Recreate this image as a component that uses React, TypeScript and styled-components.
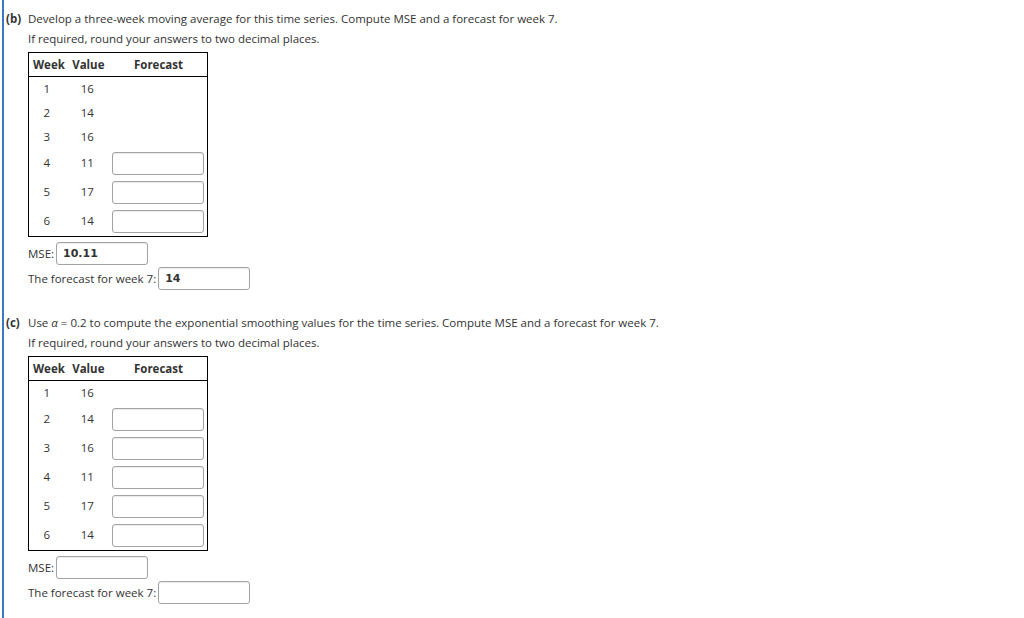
import React from "react";
import styled, { createGlobalStyle } from "styled-components";

const Global = createGlobalStyle`
  html, body { margin: 0; padding: 0; background: #fff; }
  body { font-family: "Open Sans", "DejaVu Sans", sans-serif; color: #333; }
`;

const Page = styled.div`
  margin-left: 2px;
  min-height: 618px;
  box-sizing: border-box;
  border-left: 2px solid #3c78c3;
  padding-top: 9px;
`;

const Part = styled.section<{ $gap?: number }>`
  display: grid;
  grid-template-columns: 22px 1fr;
  padding-left: 2px;
  margin-top: ${(p) => p.$gap ?? 0}px;
  font-size: 11.5px;
  line-height: 20px;
`;

const Label = styled.b`
  font-weight: 700;
  color: #333;
`;

const Body = styled.div`
  display: flex;
  flex-direction: column;
  align-items: flex-start;
`;

const Line = styled.p`
  margin: 0;
  white-space: nowrap;
`;

const Table = styled.table`
  margin-top: 3px;
  border: 1px solid #000;
  border-collapse: collapse;
  width: 180px;
  table-layout: fixed;
`;

const Col = styled.col<{ $w: number }>`
  width: ${(p) => p.$w}px;
`;

const Th = styled.th<{ $indent?: number }>`
  height: 23px;
  padding: 0;
  text-indent: ${(p) => p.$indent ?? 0}px;
  font-weight: 700;
  text-align: center;
  border-bottom: 1px solid #000;
  color: #333;
`;

const Td = styled.td<{ $tall?: boolean }>`
  height: ${(p) => (p.$tall ? 27 : 24)}px;
  padding: 0 0 ${(p) => (p.$tall ? 2 : 0)}px;
  text-align: center;
  vertical-align: middle;
`;

const InputCell = styled.td`
  padding: 0 0 0 2px;
  text-align: left;
  vertical-align: middle;
`;

const Field = styled.div<{ $w?: number }>`
  box-sizing: border-box;
  width: ${(p) => p.$w ?? 92}px;
  height: 23px;
  border: 1px solid #a3a3a3;
  border-radius: 3px;
  box-shadow: inset 0 1px 1px rgba(0, 0, 0, 0.08);
  background: #fff;
  padding: 0 6px;
  font-family: "DejaVu Sans", Verdana, sans-serif;
  font-weight: 700;
  font-size: 11px;
  line-height: 21px;
  color: #333;
  display: inline-block;
  vertical-align: middle;
`;

const AnswerRow = styled.div<{ $top: number }>`
  display: flex;
  align-items: center;
  gap: 2px;
  margin-top: ${(p) => p.$top}px;
  height: 23px;
  white-space: nowrap;
`;

type Row = { week: number; value: number; input: boolean };

const dataB: Row[] = [
  { week: 1, value: 16, input: false },
  { week: 2, value: 14, input: false },
  { week: 3, value: 16, input: false },
  { week: 4, value: 11, input: true },
  { week: 5, value: 17, input: true },
  { week: 6, value: 14, input: true },
];

const dataC: Row[] = dataB.map((r) => ({ ...r, input: r.week > 1 }));

function ForecastTable({ rows }: { rows: Row[] }) {
  return (
    <Table>
      <colgroup>
        <Col $w={36} />
        <Col $w={45} />
        <Col $w={97} />
      </colgroup>
      <thead>
        <tr>
          <Th $indent={4}>Week</Th>
          <Th $indent={2}>Value</Th>
          <Th>Forecast</Th>
        </tr>
      </thead>
      <tbody>
        {rows.map((r) => (
          <tr key={r.week}>
            <Td $tall={r.input}>{r.week}</Td>
            <Td $tall={r.input}>{r.value}</Td>
            {r.input ? (
              <InputCell>
                <Field />
              </InputCell>
            ) : (
              <Td />
            )}
          </tr>
        ))}
      </tbody>
    </Table>
  );
}

export default function App() {
  return (
    <>
      <Global />
      <Page>
        <Part>
          <Label>(b)</Label>
          <Body>
            <Line>
              Develop a three-week moving average for this time series. Compute MSE and a forecast for week 7.
            </Line>
            <Line>If required, round your answers to two decimal places.</Line>
            <ForecastTable rows={dataB} />
            <AnswerRow $top={5}>
              MSE: <Field>10.11</Field>
            </AnswerRow>
            <AnswerRow $top={2}>
              The forecast for week 7: <Field>14</Field>
            </AnswerRow>
          </Body>
        </Part>
        <Part $gap={23}>
          <Label>(c)</Label>
          <Body>
            <Line>
              Use <i>α</i> = 0.2 to compute the exponential smoothing values for the time series. Compute MSE and a
              forecast for week 7.
            </Line>
            <Line>If required, round your answers to two decimal places.</Line>
            <ForecastTable rows={dataC} />
            <AnswerRow $top={5}>
              MSE: <Field />
            </AnswerRow>
            <AnswerRow $top={2}>
              The forecast for week 7: <Field />
            </AnswerRow>
          </Body>
        </Part>
      </Page>
    </>
  );
}
